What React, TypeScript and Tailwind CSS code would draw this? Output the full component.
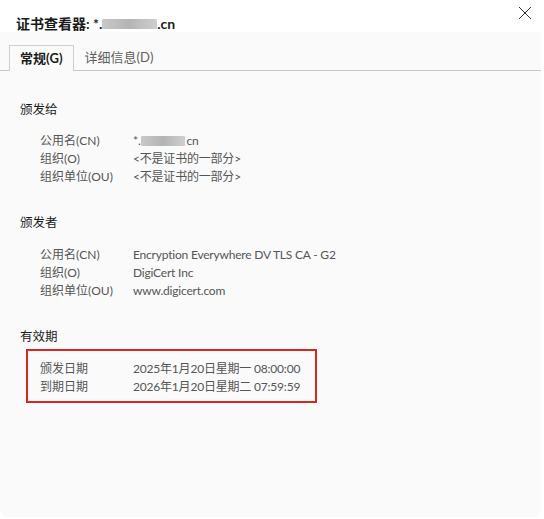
import React from "react";

const font = { fontFamily: 'Lato, "Noto Sans CJK SC", sans-serif' };

function Blur({ w }: { w: number }) {
  return (
    <span
      className="inline-block h-[10px] align-middle rounded-[1px] bg-gradient-to-r from-[#c8c8c8] via-[#b4b4b4] to-[#cfcfcf]"
      style={{ width: w }}
    />
  );
}

function Row({ label, value }: { label: string; value: React.ReactNode }) {
  return (
    <div className="flex h-[18px] items-center">
      <div className="w-[93px] shrink-0">{label}</div>
      <div className="tracking-[-0.2px]">{value}</div>
    </div>
  );
}

function Section({ title, children }: { title: string; children: React.ReactNode }) {
  return (
    <section>
      <h2 className="text-[12.5px] text-[#1b1b1b] leading-[18px]">{title}</h2>
      {children}
    </section>
  );
}

export default function App() {
  return (
    <div className="min-h-screen bg-white" style={font}>
      <div className="w-[541px] h-[517px] bg-[#fafafa] rounded-b-lg overflow-hidden flex flex-col">
        {/* Title bar */}
        <div className="h-[32px] bg-white flex items-end justify-between pl-4 pr-[9px] relative">
          <div className="text-[14px] font-bold text-[#1b1b1b] leading-[20px] mb-[-2px] flex items-center">
            <span>证书查看器: *.</span>
            <Blur w={55} />
            <span>.cn</span>
          </div>
          <button className="absolute right-[9px] top-[6px] w-[14px] h-[14px] text-[#333]">
            <svg viewBox="0 0 14 14" className="w-[14px] h-[14px]" fill="none" stroke="currentColor" strokeWidth="1">
              <path d="M1 1 L13 13 M13 1 L1 13" />
            </svg>
          </button>
        </div>

        {/* Tabs */}
        <div className="mt-[13px] flex items-end border-b border-[#c8c8c8] pl-[9px] h-[26px]">
          <div className="h-[26px] px-[10px] border border-b-0 border-[#cfcfcf] bg-[#fafafa] -mb-px flex items-center text-[13px] font-bold text-[#1b1b1b]">
            常规(G)
          </div>
          <div className="h-[25px] px-[11px] flex items-center text-[13px] text-[#5f5f5f]">详细信息(D)</div>
        </div>

        {/* Content */}
        <div className="pl-[20px] pt-[30px] text-[12px] text-[#555]">
          <Section title="颁发给">
            <div className="pl-[20px] pt-[13px]">
              <Row
                label="公用名(CN)"
                value={
                  <span className="flex items-center">
                    <span>*.</span>
                    <Blur w={44} />
                    <span className="ml-[2px]">cn</span>
                  </span>
                }
              />
              <Row label="组织(O)" value="<不是证书的一部分>" />
              <Row label="组织单位(OU)" value="<不是证书的一部分>" />
            </div>
          </Section>

          <div className="h-[28px]" />
          <Section title="颁发者">
            <div className="pl-[20px] pt-[14px]">
              <Row label="公用名(CN)" value="Encryption Everywhere DV TLS CA - G2" />
              <Row label="组织(O)" value="DigiCert Inc" />
              <Row label="组织单位(OU)" value="www.digicert.com" />
            </div>
          </Section>

          <div className="h-[28px]" />
          <Section title="有效期">
            <div className="mt-[3px] ml-[6px] w-[291px] h-[54px] border-2 border-[#d22a1e] pl-[12px] pt-[9px]">
              <Row label="颁发日期" value="2025年1月20日星期一 08:00:00" />
              <Row label="到期日期" value="2026年1月20日星期二 07:59:59" />
            </div>
          </Section>
        </div>
      </div>
    </div>
  );
}
